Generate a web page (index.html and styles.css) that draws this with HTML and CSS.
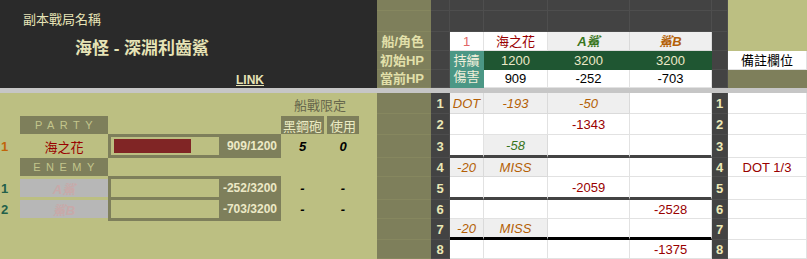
FILE: index.html
```html
<!DOCTYPE html>
<html lang="zh-Hant">
<head>
<meta charset="utf-8">
<title>海怪 - 深淵利齒鯊</title>
<link rel="stylesheet" href="styles.css">
</head>
<body>
<div class="page">
  <div class="top">
    <div class="hero">
      <div class="hero-label">副本戰局名稱</div>
      <div class="hero-title">海怪 - 深淵利齒鯊</div>
      <a class="hero-link" href="#">LINK</a>
    </div>
    <div class="sheet-top">
      <div class="c lab"></div><div class="c num"></div><div class="c dk"></div><div class="c dk"></div><div class="c dk"></div><div class="c dk"></div><div class="c num"></div><div class="c olive-lt span3"></div>
      <div class="c lab"></div><div class="c num"></div><div class="c dk"></div><div class="c dk"></div><div class="c dk"></div><div class="c dk"></div><div class="c num"></div>
      <div class="c lab">船/角色</div><div class="c num"></div><div class="c pink">1</div><div class="c red">海之花</div><div class="c gray grn bi">A鯊</div><div class="c gray org bi">鯊B</div><div class="c num"></div>
      <div class="c lab">初始HP</div><div class="c num"></div><div class="c teal span2">持續<br>傷害</div><div class="c green">1200</div><div class="c green">3200</div><div class="c green">3200</div><div class="c num"></div><div class="c">備註欄位</div>
      <div class="c lab">當前HP</div><div class="c num"></div><div class="c">909</div><div class="c">-252</div><div class="c">-703</div><div class="c num"></div><div class="c olive"></div>
    </div>
  </div>
  <div class="sep"></div>
  <div class="bottom">
    <div class="roster">
      <div class="ro-title"><span class="ro-title-text">船戰限定</span></div>
      <div class="ro-line h18">
        <div class="w-num"></div>
        <div class="w-name tag">PARTY</div>
        <div class="w-bar"></div>
        <div class="w-x tag2">黑鋼砲</div>
        <div class="w-y tag2">使用</div>
      </div>
      <div class="ro-line h24">
        <div class="w-num n-party">1</div>
        <div class="w-name nm-party">海之花</div>
        <div class="w-bar frame">
          <div class="bar-row">
            <div class="track"><div class="fill" style="width:77px"></div></div>
            <div class="val">909/1200</div>
          </div>
        </div>
        <div class="w-x stat">5</div>
        <div class="w-y stat">0</div>
      </div>
      <div class="ro-line h18">
        <div class="w-num"></div>
        <div class="w-name tag">ENEMY</div>
      </div>
      <div class="ro-line h45">
        <div class="w-num stack"><div class="n-enemy">1</div><div class="n-enemy">2</div></div>
        <div class="w-name stack"><div class="nm-enemy">A鯊</div><div class="nm-enemy">鯊B</div></div>
        <div class="w-bar frame">
          <div class="bar-row"><div class="track"></div><div class="val">-252/3200</div></div>
          <div class="bar-row"><div class="track"></div><div class="val">-703/3200</div></div>
        </div>
        <div class="w-x stack"><div class="stat">-</div><div class="stat">-</div></div>
        <div class="w-y stack"><div class="stat">-</div><div class="stat">-</div></div>
      </div>
    </div>
    <div class="sheet-body">
      <div class="r h21">
        <div class="c lab k1"></div><div class="c num k2">1</div>
        <div class="c k3 gray org i">DOT</div><div class="c k4 gray org i">-193</div><div class="c k5 gray org i">-50</div><div class="c k6"></div>
        <div class="c num k7">1</div><div class="c k8"></div>
      </div>
      <div class="r h21">
        <div class="c lab k1"></div><div class="c num k2">2</div>
        <div class="c k3"></div><div class="c k4"></div><div class="c k5 red">-1343</div><div class="c k6"></div>
        <div class="c num k7">2</div><div class="c k8"></div>
      </div>
      <div class="r h23 thick">
        <div class="c lab k1"></div><div class="c num k2">3</div>
        <div class="c k3 d"></div><div class="c k4 d gray grn i">-58</div><div class="c k5 d"></div><div class="c k6 d"></div>
        <div class="c num k7">3</div><div class="c k8"></div>
      </div>
      <div class="r h19">
        <div class="c lab k1"></div><div class="c num k2">4</div>
        <div class="c k3 gray org i">-20</div><div class="c k4 gray org i">MISS</div><div class="c k5"></div><div class="c k6"></div>
        <div class="c num k7">4</div><div class="c k8 red">DOT 1/3</div>
      </div>
      <div class="r h23 thick">
        <div class="c lab k1"></div><div class="c num k2">5</div>
        <div class="c k3 d"></div><div class="c k4 d"></div><div class="c k5 d red">-2059</div><div class="c k6 d"></div>
        <div class="c num k7">5</div><div class="c k8"></div>
      </div>
      <div class="r h19">
        <div class="c lab k1"></div><div class="c num k2">6</div>
        <div class="c k3"></div><div class="c k4"></div><div class="c k5"></div><div class="c k6 red">-2528</div>
        <div class="c num k7">6</div><div class="c k8"></div>
      </div>
      <div class="r h21 black">
        <div class="c lab k1"></div><div class="c num k2">7</div>
        <div class="c k3 d gray org i">-20</div><div class="c k4 d gray org i">MISS</div><div class="c k5 d"></div><div class="c k6 d"></div>
        <div class="c num k7">7</div><div class="c k8"></div>
      </div>
      <div class="r h19">
        <div class="c lab k1"></div><div class="c num k2">8</div>
        <div class="c k3"></div><div class="c k4"></div><div class="c k5"></div><div class="c k6 red">-1375</div>
        <div class="c num k7">8</div><div class="c k8"></div>
      </div>
    </div>
  </div>
</div>
</body>
</html>
```

FILE: styles.css
```css
* { box-sizing: border-box; margin: 0; padding: 0; }
html, body { width: 807px; height: 259px; overflow: hidden; }
body {
  margin: 0;
  font-family: "Liberation Sans", Arial, "Noto Sans CJK TC", sans-serif;
  font-size: 13px;
  color: #000;
  background: #fff;
}
.page { width: 807px; height: 259px; display: flex; flex-direction: column; }

/* ---------- top ---------- */
.top { display: flex; height: 88px; }
.hero {
  width: 377px;
  background: #2a2a2a;
  color: #e6e3b6;
  padding: 12px 0 0 23px;
  display: flex;
  flex-direction: column;
  align-items: flex-start;
}
.hero-label { font-size: 13px; line-height: 16px; }
.hero-title { font-size: 17px; font-weight: bold; line-height: 22px; margin: 10px 0 0 52px; }
.hero-link {
  font-size: 12px; font-weight: bold; line-height: 14px;
  margin: 13px 0 0 213px;
  color: #e6e3b6;
  text-decoration: underline;
}

.sheet-top {
  width: 430px;
  display: grid;
  grid-template-columns: 54px 19px 34px 64px 82px 82px 16px 79px;
  grid-template-rows: 11px 21px 19px 19px 18px;
}

.sep { height: 5px; background: #c6c6c6; }

/* ---------- cells ---------- */
.c {
  display: flex;
  align-items: center;
  justify-content: center;
  border-right: 1px solid #e2e2e2;
  border-bottom: 1px solid #e2e2e2;
  white-space: nowrap;
  overflow: hidden;
  background: #fff;
  line-height: 15px;
}
.lab {
  background: #7e7f5b;
  border-color: #7e7f5b;
  border-bottom-color: #86875f;
  justify-content: flex-end;
  padding-right: 6px;
  color: #e2e0aa;
  font-weight: bold;
}
.num {
  background: #434343;
  border-color: #4d4d4d;
  color: #ebe8b6;
  font-weight: bold;
}
.dk { background: #434343; border-color: #4e4e4e; }
.olive-lt { background: #bcbf82; border-color: #bcbf82; }
.olive { background: #7e7f5b; border-color: #7e7f5b; }
.span3 { grid-row: span 3; }
.span2 { grid-row: span 2; }
.teal {
  background: #4b9785;
  border-color: #4b9785;
  color: #f2f0dc;
  line-height: 16px;
  text-align: center;
  white-space: normal;
}
.green { background: #1f5632; border-color: #1f5632; color: #ece9c8; }
.gray { background: #efefef; border-color: #dadada; }
.pink { color: #e06666; }
.red { color: #990000; }
.grn { color: #38761d; }
.org { color: #b45f06; }
.i { font-style: italic; }
.bi { font-style: italic; font-weight: bold; }

/* ---------- bottom ---------- */
.bottom { display: flex; height: 166px; }
.roster { width: 377px; background: #bcbf82; display: flex; flex-direction: column; }
.ro-title { height: 23px; display: flex; align-items: center; padding-left: 281px; }
.ro-title-text { width: 78px; text-align: center; color: #67674c; font-size: 13px; }
.ro-line { display: flex; }
.h18 { height: 18px; }
.h24 { height: 24px; }
.h45 { height: 45px; }
.w-num { width: 20px; }
.w-name { width: 88px; }
.w-bar { width: 173px; }
.w-x { width: 43px; }
.w-y { width: 32px; margin-left: 3px; }

.tag {
  background: #7e7f5b;
  color: #c3c68c;
  font-size: 11px;
  letter-spacing: 5.5px;
  padding-left: 5px;
  display: flex; align-items: center; justify-content: center;
}
.tag2 {
  background: #7e7f5b;
  color: #ecebc3;
  display: flex; align-items: center; justify-content: center;
}
.n-party { color: #c1650a; font-weight: bold; padding-left: 1px; display: flex; align-items: center; }
.nm-party { color: #990000; display: flex; align-items: center; justify-content: center; }
.stack { display: flex; flex-direction: column; gap: 3px; padding: 3px 0; }
.stack > div { height: 18px; display: flex; align-items: center; }
.n-enemy { color: #22604a; font-weight: bold; padding-left: 1px; }
.nm-enemy {
  background: #b7b7b7;
  color: #c8a9a9;
  font-weight: bold;
  font-style: italic;
  justify-content: center;
}
.stat { font-weight: bold; font-style: italic; display: flex; align-items: center; justify-content: center; }
.stack > .stat { justify-content: center; }

.frame { background: #7e7f5b; padding: 3px 0 3px 3px; display: flex; flex-direction: column; gap: 3px; }
.bar-row { display: flex; height: 18px; }
.track { width: 108px; height: 18px; background: #bcbf82; padding: 2px 3px; }
.fill { height: 14px; background: #802525; }
.val {
  flex: 1;
  text-align: right;
  padding-right: 4px;
  font-size: 12px;
  font-weight: bold;
  line-height: 18px;
  color: #ece9c6;
}

/* ---------- sheet body ---------- */
.sheet-body { width: 430px; display: flex; flex-direction: column; }
.r { display: flex; }
.h21 { height: 21px; }
.h23 { height: 23px; }
.h19 { height: 19px; }
.k1 { width: 54px; }
.k2 { width: 19px; }
.k3 { width: 34px; }
.k4 { width: 64px; }
.k5 { width: 82px; }
.k6 { width: 82px; }
.k7 { width: 16px; }
.k8 { width: 79px; }
.thick .d { border-bottom: 3px solid #434343; }
.black .d { border-bottom: 3px solid #000; }
```
